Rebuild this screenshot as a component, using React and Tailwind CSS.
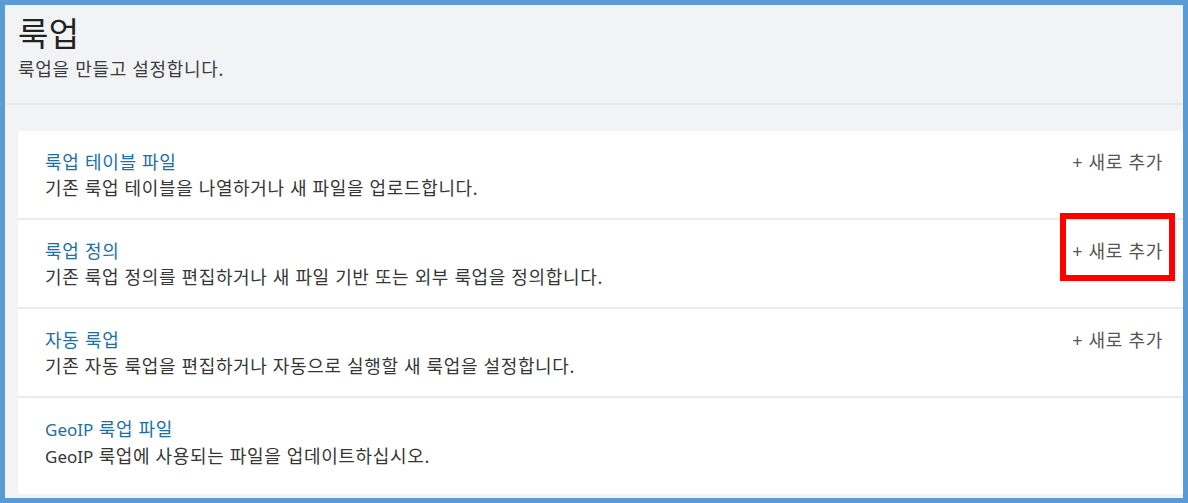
import React from "react";

const Geo = () => <span className="text-[17px] tracking-[0px]">GeoIP</span>;

const rows = [
  { title: "룩업 테이블 파일", desc: "기존 룩업 테이블을 나열하거나 새 파일을 업로드합니다.", add: true },
  { title: "룩업 정의", desc: "기존 룩업 정의를 편집하거나 새 파일 기반 또는 외부 룩업을 정의합니다.", add: true },
  { title: "자동 룩업", desc: "기존 자동 룩업을 편집하거나 자동으로 실행할 새 룩업을 설정합니다.", add: true },
  {
    title: (
      <>
        <Geo /> 룩업 파일
      </>
    ),
    desc: (
      <>
        <Geo /> 룩업에 사용되는 파일을 업데이트하십시오.
      </>
    ),
    add: false,
  },
];

export default function App() {
  return (
    <div
      className="relative w-[1188px] h-[503px] border-[5px] border-[#5b9bd5] bg-[#f2f3f5] overflow-hidden flex flex-col"
      style={{ fontFamily: '"Noto Sans", "Noto Sans CJK KR", sans-serif' }}
    >
      <div className="h-[100px] shrink-0 border-b-2 border-[#e3e6ea] pl-[13px] pt-[10px]">
        <div className="text-[33px] leading-[38px] tracking-[0.5px] text-[#222]">룩업</div>
        <div className="text-[18px] leading-[26px] mt-[3px] tracking-[0.7px] text-[#3c3c3c]">룩업을 만들고 설정합니다.</div>
      </div>
      <div className="pl-[13px] pt-[26px] flex-1">
        <div className="bg-white">
          {rows.map((r, i) => (
            <div
              key={i}
              className={
                i < 3
                  ? "flex justify-between pl-[27px] pr-[20px] pt-[18px] pb-[17px] border-b-2 border-[#e8ebef]"
                  : "flex justify-between pl-[27px] pr-[20px] pt-[18px] pb-[24px]"
              }
            >
              <div>
                <div className="text-[18px] leading-[26px] tracking-[0.7px] text-[#1c6fa6]">{r.title}</div>
                <div className="text-[18px] leading-[26px] tracking-[0.65px] text-[#363636]">{r.desc}</div>
              </div>
              {r.add && (
                <div className="text-[18px] leading-[26px] tracking-[0.7px] text-[#555]">+ 새로 추가</div>
              )}
            </div>
          ))}
        </div>
      </div>
      <div className="absolute left-[1055px] top-[208px] w-[115px] h-[68px] border-[6px] border-[#ff0000]" />
    </div>
  );
}
